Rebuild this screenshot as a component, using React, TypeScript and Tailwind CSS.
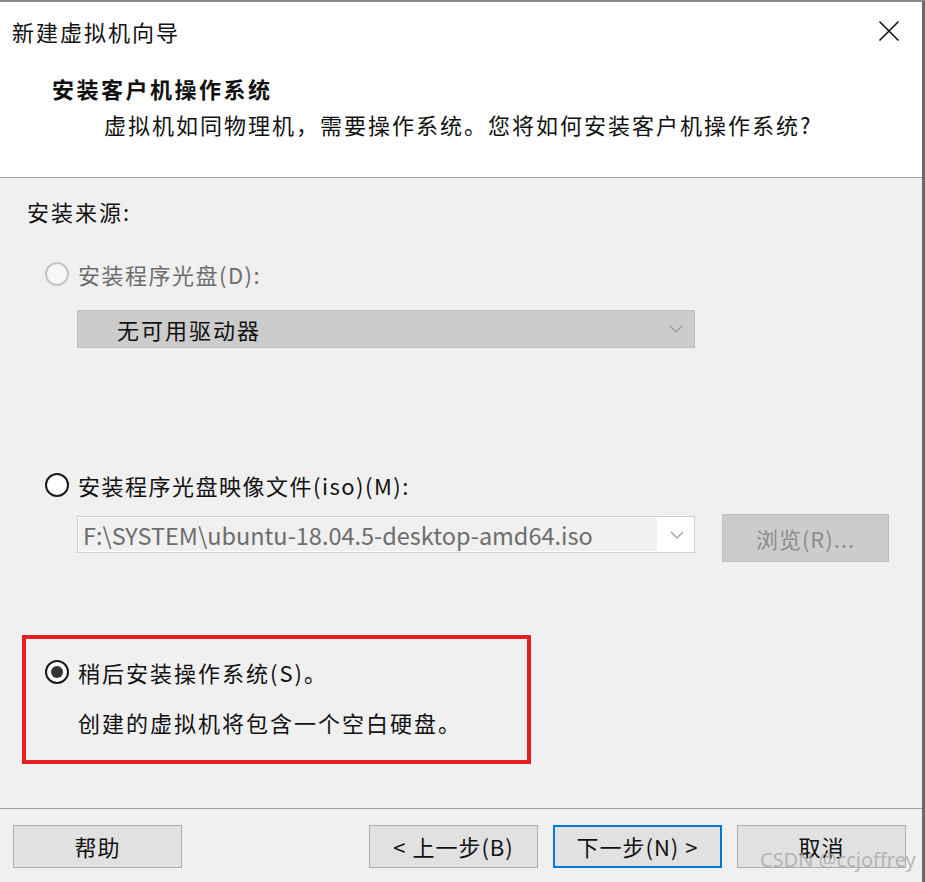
import React from "react";

const FONT = "font-['Noto_Sans_CJK_SC','Noto_Sans',sans-serif]";

function Radio({ state }: { state: "disabled" | "off" | "on" }) {
  if (state === "disabled")
    return <span className="w-[24px] h-[24px] rounded-full border-2 border-[#c4c4c4] bg-[#f7f7f7] shrink-0" />;
  if (state === "off")
    return <span className="w-[24px] h-[24px] rounded-full border-2 border-[#1a1a1a] bg-white shrink-0" />;
  return (
    <span className="w-[24px] h-[24px] rounded-full border-2 border-[#1a1a1a] bg-white shrink-0 flex items-center justify-center">
      <span className="w-[12px] h-[12px] rounded-full bg-[#333333]" />
    </span>
  );
}

function Chevron() {
  return (
    <svg width="14" height="8" viewBox="0 0 14 8" className="shrink-0">
      <path d="M1 1 L7 7 L13 1" fill="none" stroke="#9a9a9a" strokeWidth="1.2" />
    </svg>
  );
}

function Btn({ children, primary }: { children: React.ReactNode; primary?: boolean }) {
  return (
    <div
      className={
        "w-[169px] h-[43px] flex items-center justify-center bg-[#e1e1e1] text-[22px] text-[#111] tracking-[1px] " +
        (primary ? "border-2 border-[#0078d7]" : "border border-[#adadad]")
      }
    >
      {children}
    </div>
  );
}

export default function App() {
  return (
    <div className={`${FONT} relative w-[925px] h-[882px] bg-[#f0f0f0] flex flex-col border-t-2 border-t-[#8a8a8a] border-r-[3px] border-r-[#6a6a6a] overflow-hidden`}>
      {/* Header */}
      <div className="h-[176px] bg-white border-b border-[#a0a0a0] flex flex-col shrink-0">
        <div className="flex items-start justify-between pt-[16px] pl-[12px] pr-[22px]">
          <div className="text-[22px] leading-[26px] tracking-[2px] text-[#111]">新建虚拟机向导</div>
          <svg width="22" height="22" viewBox="0 0 22 22" className="mt-[2px]">
            <path d="M1.5 1.5 L20.5 20.5 M20.5 1.5 L1.5 20.5" stroke="#111" strokeWidth="1.6" fill="none" />
          </svg>
        </div>
        <div className="pl-[52px] mt-[31px] text-[22px] leading-[26px] tracking-[2.5px] font-bold text-[#111]">安装客户机操作系统</div>
        <div className="pl-[104px] mt-[10px] text-[22px] leading-[26px] tracking-[2px] text-[#111]">
          虚拟机如同物理机，需要操作系统。您将如何安装客户机操作系统?
        </div>
      </div>

      {/* Body */}
      <div className="flex-1 flex flex-col pl-[27px] pt-[20px]">
        <div className="text-[22px] leading-[26px] tracking-[2px] text-[#111]">安装来源:</div>

        <div className="flex items-center gap-[9px] ml-[18px] mt-[37px] h-[26px]">
          <Radio state="disabled" />
          <span className="text-[22px] leading-[26px] tracking-[1.5px] text-[#6d6d6d]">安装程序光盘(D):</span>
        </div>

        <div className="ml-[50px] mt-[23px] w-[618px] h-[38px] bg-[#cccccc] border border-[#bdbdbd] flex items-center pl-[39px] pr-[11px]">
          <span className="flex-1 text-[22px] leading-[26px] tracking-[2px] text-[#111]">无可用驱动器</span>
          <Chevron />
        </div>

        <div className="flex items-center gap-[9px] ml-[18px] mt-[124px] h-[26px]">
          <Radio state="off" />
          <span className="text-[22px] leading-[26px] tracking-[1.5px] text-[#111]">安装程序光盘映像文件(iso)(M):</span>
        </div>

        <div className="flex items-start ml-[50px] mt-[16px]">
          <div className="mt-[2px] w-[618px] h-[37px] bg-white border border-[#cfcfcf] flex items-center pl-[1px] pr-[10px]">
            <div className="w-[578px] h-[33px] bg-[#f0f0f0] flex items-center pl-[4px] overflow-hidden">
              <span className="text-[23.5px] leading-[28px] text-[#6d6d6d] whitespace-nowrap">F:\SYSTEM\ubuntu-18.04.5-desktop-amd64.iso</span>
            </div>
            <div className="flex-1 flex justify-end">
              <Chevron />
            </div>
          </div>
          <div className="ml-[27px] w-[167px] h-[48px] bg-[#cccccc] border border-[#bfbfbf] flex items-center justify-center text-[22px] tracking-[1px] text-[#8d8d8d]">
            浏览(R)...
          </div>
        </div>

        <div className="ml-[-5px] mt-[73px] w-[509px] h-[129px] border-4 border-[#e81e25] flex flex-col pl-[19px] pt-[20px]">
          <div className="flex items-center gap-[9px] h-[26px]">
            <Radio state="on" />
            <span className="text-[22px] leading-[26px] tracking-[2px] text-[#111]">稍后安装操作系统(S)。</span>
          </div>
          <div className="ml-[33px] mt-[24px] text-[22px] leading-[26px] tracking-[2px] text-[#111]">
            创建的虚拟机将包含一个空白硬盘。
          </div>
        </div>
      </div>

      {/* Footer */}
      <div className="h-[74px] shrink-0 border-t border-[#a0a0a0] flex items-start pt-[16px] pl-[13px] pr-[16px]">
        <Btn>帮助</Btn>
        <div className="flex-1" />
        <div className="flex gap-[15px]">
          <Btn>&lt; 上一步(B)</Btn>
          <Btn primary>下一步(N) &gt;</Btn>
          <Btn>取消</Btn>
        </div>
      </div>

      <div className="absolute left-[760px] top-[846px] text-[20px] leading-[24px] text-[#a8a8a8]/80 font-['Noto_Sans',sans-serif] pointer-events-none">
        CSDN @ccjoffrey
      </div>
    </div>
  );
}
